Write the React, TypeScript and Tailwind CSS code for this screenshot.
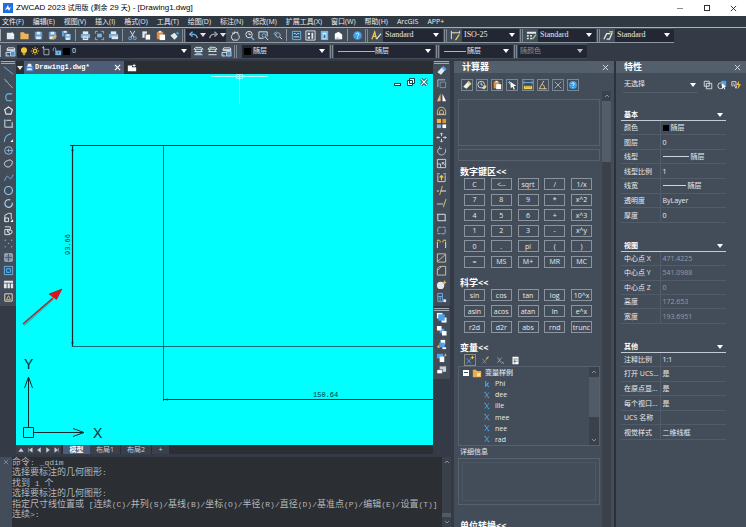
import { useState } from 'react';
import type { ReactNode } from 'react';
import clsx from 'clsx';

const W = '#e4e9ef';
const B = '#6db7ea';
const O = '#f0b050';

/* 12x12 toolbar glyphs */
const icons: Record<string, ReactNode> = {
  newFile: <><path d="M2 3h6l2 2v5H2z" fill={W} /><path d="M8 2.500v4M6 4.500h4" stroke="#fff" /></>,
  open: <path d="M1.500 2.500h4l1 1.500h4v6h-9z" fill="#eeb25d" />,
  save: <><path d="M2 2h8v8H2z" fill="#5f9fd8" /><path d="M4 2h4v3H4zM3.500 7h5v3h-5z" fill={W} /></>,
  saveAs: <><path d="M2 2h8v8H2z" fill="#5f9fd8" /><path d="M4 2h4v3H4zM3 7h4v3H3z" fill={W} /><path d="M6 10l4-4" stroke={O} strokeWidth="2" /></>,
  saveAll: <><path d="M1 1h6v6H1z" fill="#5f9fd8" /><path d="M3 1h3v2H3z" fill={W} /><path d="M4 4h7v7H4z" fill="#7db8e8" stroke="#2f3a48" strokeWidth=".6" /><path d="M6 4.500h3v2H6zM5.500 8.500h4V11h-4z" fill={W} /></>,
  print: <><path d="M3 1.500h6v3H3z" fill={W} /><path d="M1 4.500h10v4H1z" fill="#7ab6e6" /><path d="M3 7h6v4H3z" fill={W} /><path d="M4 9h4" stroke="#5b7d9b" /></>,
  preview: <><path d="M1.500 4V1.500H4M8 1.500h2.500V4M10.500 8v2.500H8M4 10.500H1.500V8" fill="none" stroke="#a6b3c2" /><path d="M3.500 4h5v4h-5z" fill="#7ab6e6" /></>,
  publish: <><path d="M3 1.500h6v3H3z" fill={W} /><path d="M1 4.500h10v4H1z" fill="#7ab6e6" /><path d="M4 7h7v3H4z" fill={W} /></>,
  cut: <><path d="M3.500 1l4 7M8.500 1l-4 7" stroke={W} fill="none" /><circle cx="3.500" cy="9" r="1.600" fill="none" stroke={B} /><circle cx="8.500" cy="9" r="1.600" fill="none" stroke={B} /></>,
  copy: <><path d="M1.500 1.500h5v7h-5z" fill={W} /><path d="M4.500 4.500h6v6.500h-6z" fill="#fff" stroke="#3e4855" /></>,
  paste: <><path d="M2 2h7v8H2z" fill="#d98d3f" /><path d="M4 1h3v2H4z" fill={W} /><path d="M5 5h6v6H5z" fill="#fff" /></>,
  match: <><path d="M1.500 6L6 3l3.500 4L6 10.500z" fill={W} /><path d="M7 3.500L10 1.500l1 4z" fill="#4f9fe0" /></>,
  undo: <path d="M10 9C10 5 7 4.500 4 4.500M5 2L2 4.500 5 7" fill="none" stroke={B} strokeWidth="1.500" />,
  redo: <path d="M2 9c0-4 3-4.500 6-4.500M7 2l3 2.500L7 7" fill="none" stroke="#9aa4b0" strokeWidth="1.500" />,
  pan: <path d="M3 11C1 8 1 6 3 5V3l2 1V2l2 1 1-1 1 3c2 2 1 5-1 6z" fill="none" stroke={W} />,
  zoomRt: <><circle cx="5.500" cy="5" r="3.500" fill="none" stroke={W} /><path d="M5.500 3v2h2" stroke={W} fill="none" /><path d="M8 8l3 3" stroke={B} strokeWidth="1.500" /></>,
  zoomWin: <><path d="M1 2h9v5M1 2v7h5" stroke={W} fill="none" /><circle cx="6.500" cy="6" r="2" fill="none" stroke={B} /><path d="M8 7.500l3 3.500" stroke={W} /></>,
  zoomPrev: <><path d="M5 2L2 4l3 2" stroke={B} fill="none" /><circle cx="6.500" cy="5.500" r="2.500" fill="none" stroke="#aab4c0" /><path d="M8.500 7.500L11 10" stroke={W} /></>,
  props: <><path d="M1.500 1.500h9v9h-9z" fill="#28506f" stroke={B} /><path d="M3 4h2l1 1 1-1h2M3 7.500h6" stroke={W} fill="none" /></>,
  design: <><path d="M1 1h10v10H1z" fill="none" stroke={W} /><path d="M3 3h2.500v2.500H3zM3 7h2.500v2.500H3zM7 3h2v6.500H7z" fill={W} /></>,
  palette: <><path d="M2 1h8v10H2z" fill={B} /><path d="M4 3h4v7H4z" fill={W} /><path d="M5 5h2v4H5z" fill="#386a94" /></>,
  markup: <><path d="M2 4l4-2 4 3v5H2z" fill="#fff" /><path d="M2 10l3-3 3 3z" fill="#cbd3dc" /></>,
  help: <><circle cx="6" cy="6" r="4.700" fill="#3fa0e8" /><path d="M4.500 4.700c0-2 3.200-1.800 3 0C7.500 6 6 6 6 7.200" fill="none" stroke="#fff" /><path d="M5.500 8.300h1v1h-1z" fill="#fff" /></>,
  textStyle: <><path d="M1 10L4 2l2 8M2 7h4" stroke="#f3cf4f" fill="none" strokeWidth="1.300" /><path d="M6 10l5-6" stroke={W} strokeWidth="1.300" /></>,
  dimStyle: <><path d="M1.500 1v9M1.500 3h9M10.500 1v3" stroke={W} fill="none" /><path d="M3 3l2-1v2z" fill={O} /><path d="M6 11l4-6" stroke="#f3cf4f" strokeWidth="1.300" /></>,
  tableStyle: <><path d="M1 2h10v2H1zM1 5.500h2v1.500H1zM4.500 5.500h2v1.500h-2zM1 8.500h2V10H1zM4.500 8.500h2V10h-2z" fill={W} /><path d="M7 10l4-5" stroke="#8ed68a" strokeWidth="1.500" /></>,
  leader: <><path d="M1 10l3-6h4M4 10h3l3-7" stroke={W} fill="none" strokeWidth="1.400" /><path d="M7 2h4" stroke="#c7dc63" strokeWidth="1.500" /></>,
  layers: <><path d="M3 2h7l1 2H2zM2 5h9M1 7h9" stroke={W} fill="none" /><path d="M1 7v4h4M6 6h5v5H6z" stroke={W} fill="#4e93cd" strokeWidth=".7" /></>,
  layerState: <><path d="M3 1.500h6l2 2H1zM1.500 6h9M1.500 9.500h9M3 6V3.500M9 6V3.500" stroke={W} fill="none" /><path d="M3 7h6v2H3z" fill={B} /></>,
  layerPrev: <><path d="M3 1.500h6l2 2H1zM1.500 6h9M1.500 9.500h9M3 6V3.500M9 6V3.500" stroke={W} fill="none" /><path d="M5 0L2 2l3 2" fill="#74cf74" /></>,
  bulb: <><circle cx="6" cy="5" r="3.600" fill="#f7c52f" /><path d="M4.500 8h3v3h-3z" fill="#c9a140" /></>,
  sun: <><circle cx="6" cy="6" r="2" fill="none" stroke="#f7c52f" strokeWidth="1.300" /><path d="M6 1v2M6 9v2M1 6h2M9 6h2M2.500 2.500l1.400 1.400M8.100 8.100l1.400 1.400M9.500 2.500L8.100 3.900M3.900 8.100L2.500 9.500" stroke="#f7c52f" /></>,
  viewport: <path d="M3.500 4h6v6.500h-6zM1 2h3M3 0v4" fill="none" stroke="#b4bcc6" />,
  unlock: <><path d="M1.500 6V3.500c0-2 3-2 3 0V6" fill="none" stroke={B} /><path d="M4 5.500h7v5.500H4z" fill={B} /><path d="M7 7h1v2H7z" fill="#214766" /></>,
  dwg: <><path d="M1 6l3-4h5l2 4v5H1z" fill="#3f8ede" /><path d="M4 1h4l1 4H3zM3 7h6v2.500H3z" fill="#e7f2ff" /></>,
  newTab: <><path d="M1 3h5v2h5v5H1z" fill="#fff" /><path d="M8.500 1v4M6.500 3h4" stroke="#fff" /></>,

  line: <path d="M1 2l10 8" stroke={B} />,
  xline: <path d="M1.500 1l9 10M4 3l-1 1" stroke="#7fc4ee" />,
  pline: <path d="M10 2H6C2 2 2 9.500 6 9.500h4" fill="none" stroke={B} strokeWidth="1.200" />,
  polygon: <path d="M6 2l4.200 3.200L8.700 10H3.300L1.800 5.200z" fill="none" stroke={W} strokeWidth="1.200" />,
  rect: <><path d="M2 3v7h8V4.500M3.500 2.500H9" fill="none" stroke={W} /><path d="M1 1.500h2v2H1zM9 9h2v2H9z" fill={B} /></>,
  arc: <><path d="M1.500 11C1.500 6 4 3 9 2" fill="none" stroke={B} strokeWidth="1.200" /><path d="M11 8v3H8z" fill="#fff" /></>,
  circle: <><circle cx="6" cy="6" r="4.200" fill="none" stroke="#a8bccb" /><path d="M6 4v4M4 6h7" stroke={B} /></>,
  revcloud: <path d="M3 9C0 7 2 3 5 3c3-2 6 0 5 3-1 3-4 5-7 3z" fill="none" stroke={W} />,
  spline: <path d="M1 9c2 1 2-6 4.500-4S8 10 11 3" fill="none" stroke={B} />,
  ellipse: <circle cx="6" cy="6" r="4.300" fill="none" stroke="#8fd0f4" strokeWidth="1.200" />,
  earc: <path d="M8 2C2 0 0 8 5 10c3 1 6-2 5-5" fill="none" stroke="#a9cfe6" strokeWidth="1.300" />,
  insert: <><path d="M2 10.500V3.500L6 1.500h3v6.500M2 6.500h4v4H2z" fill="none" stroke={W} /><path d="M11 8v3H8z" fill="#fff" /></>,
  block: <><path d="M2 2h6v3H2v5.500h6M5 5v3" fill="none" stroke={W} /><circle cx="8" cy="7.500" r="2" fill="none" stroke={W} /></>,
  point: <path d="M2 2h1v1H2zM9 2h1v1H9zM5.500 5.500h1v1h-1zM2 9h1v1H2zM9 9h1v1H9z" fill={B} stroke={B} strokeWidth=".3" />,
  hatch: <><path d="M2 2h8v8H2z" fill="#7790a5" stroke="#b8c5d1" /><path d="M2 6h8M6 2v8" stroke="#4b5b6b" /></>,
  region: <><path d="M1.500 1.500h9v9h-9z" fill="#25567c" stroke={B} /><path d="M4 4h4v4H4z" fill="none" stroke={B} /></>,
  table: <path d="M1 2h10v2H1zM1 5h3v5H1zM5 5h2.500v5H5zM8.500 5H11v5H8.500z" fill={W} />,
  mtext: <><path d="M2 2h8v8H2z" fill="#3a434e" stroke={W} /><path d="M4 8l2-4 2 4M3.500 8.500h5" stroke="#f0c85a" fill="none" /></>,

  erase: <><path d="M1.500 8L7 2l3.500 3L5.500 10.500z" fill={W} /><path d="M6 3l2-2 3.500 3.500L9.500 6.500z" fill="#5ea9e6" /></>,
  copyObj: <><path d="M2 10V2h8" fill="none" stroke="#b8c2cd" /><path d="M4.500 4.500h6v6h-6z" fill="none" stroke="#7d97ad" /></>,
  mirror: <><path d="M5 1.500V10H1z" fill="#e7bd82" /><path d="M7 1.500V10h4z" fill="#fff" /></>,
  offset: <path d="M1.500 10.500V7C2 1 10 1 10.500 7v3.500zM4 10V7c0-2 4-2 4 0v3z" fill="none" stroke="#e5c58c" />,
  array: <><path d="M1 1h4.500v4.500H1z" fill={O} /><path d="M7 1h4v4.500H7z" fill="#e39532" /><path d="M1 7h4.500v4H1z" fill="#7db8e8" /><path d="M7 7h4v4H7z" fill="#fff" /></>,
  move: <path d="M6 1v3.500M6 7.500V11M1 6h3.500M7.500 6H11M4.500 2.500L6 1l1.500 1.500M4.500 9.500L6 11l1.500-1.500M2.500 4.500L1 6l1.500 1.500M9.500 4.500L11 6 9.500 7.500" fill="none" stroke={W} strokeWidth=".9" />,
  rotate: <path d="M4 1.500v2.500h2.500M4 3C0 6 2 11 6 10.800c3.500 0 5.500-3.800 4-6.800" fill="none" stroke="#c5ccd5" />,
  scale: <path d="M1.500 1.500h9v9h-9zM1.500 6.500H5v4M7 5l3 3M7 5h2M7 5v2" fill="none" stroke="#d2d8df" />,
  stretch: <><path d="M2 3.500v7h8v-7M1 2h3M8 2h3" fill="none" stroke="#dfd7c2" /><path d="M6 9V4M4 6l2-2 2 2" stroke="#f3c64c" fill="none" strokeWidth="1.300" /></>,
  trim: <><path d="M7 1L4 11" stroke="#e6bf60" /><path d="M5 6.500h6M1 6.500h2" stroke={W} strokeWidth="1.200" /></>,
  extend: <><path d="M1 6.500h7" stroke="#cfd5dc" /><path d="M11 1L8 10" stroke="#e0c781" /></>,
  breakAt: <path d="M2 2.500h8v7H2zM1 2.500h1M10 9.500h1" fill="none" stroke={W} />,
  breakObj: <path d="M2 2.500h8v7H2z" fill="none" stroke="#9eb6c8" strokeDasharray="4 1" />,
  join: <><path d="M1.500 4v7M10.500 4v7" stroke={W} /><path d="M1 2h3v1H1zM8 2h3v1H8zM4 3h1v2H4zM7 3h1v2H7z" fill="#f1ce55" /></>,
  chamfer: <path d="M1.500 2v9h9V2zM2 10l8-7" fill="none" stroke="#cfc4aa" />,
  fillet: <path d="M1.500 11V6c0-3 1-4.500 4-4.500h5V11zM1.500 6L6 1.500" fill="none" stroke="#cfc4aa" />,
  explode: <><circle cx="5" cy="7" r="4" fill={W} /><path d="M7 4l3-3v2l1.500.5L9 6z" fill="#e7b24d" /></>,
  editBlock: <><path d="M2 1.500h5v9H2zM2 5h5M4.500 5v5" fill="none" stroke={B} /><path d="M8 8h3v3H8z" fill={W} /></>,
  front: <><path d="M1 1h6v6H1z" fill="#fff" /><path d="M6 6h5.500v5.500H6z" fill="#fff" /><path d="M2.500 2.500h7v7h-7z" fill="#4aa2ec" /></>,
  back: <><path d="M4 4h5v5H4z" fill="#4aa2ec" /><path d="M1 1h5v5H1zM6.500 6.500h5v5h-5z" fill="#fff" /></>,
  above: <><path d="M5 1h5v5H5z" fill="#fff" /><path d="M3.500 4h6v5h-6z" fill="#4aa2ec" /><path d="M7 9h4v2H7z" fill="#fff" /><path d="M1 9l2-3 1 4z" fill={O} /></>,
  under: <><path d="M1 2h7v5H1z" fill="#4aa2ec" /><path d="M4 5h5v6H4z" fill="#fff" /><path d="M9 5l1-4 1.500 3z" fill={O} /></>,
  orderText: <><path d="M4 1.500h7v6H4z" fill="#c7cfd8" /><path d="M1 5h6v4.500H1z" fill="#fff" stroke="#3a434e" strokeWidth=".7" /></>,

  clear: <><path d="M1.500 8L7 2l3.500 3L5.500 10.500z" fill="#f4f1e6" /><path d="M6 3l2-2 3.500 3.500L9.500 6.500z" fill="#e8c98f" /></>,
  history: <><circle cx="5" cy="5.500" r="4" fill="none" stroke={W} /><path d="M5 3v3h2" stroke={W} fill="none" /><path d="M6 10l4-4 1.500 2-3 3.500z" fill="#e7d5b0" /></>,
  getPoint: <><path d="M3 1v4M1 3h4" stroke={B} /><path d="M4 2l7 5-3 .5L9.500 11 8 11.500 6.500 8 4.500 10z" fill="#fff" /></>,
  distance: <><path d="M1 3h10M1 1v4M11 1v4" stroke={B} /><path d="M1 7h10v4H1z" fill="#f0d14f" /><path d="M3 7v2M5 7v2M7 7v2M9 7v2" stroke="#5c5640" strokeWidth=".6" /></>,
  angle: <path d="M7 1L1.500 10.500h9M5 5c2 1 3 3 3 5.500" fill="none" stroke="#f0dca2" />,
  cross: <path d="M2 2l8 8M10 2l-8 8" stroke="#c3cbd4" strokeWidth=".9" />,
  varNew: <><path d="M2 4l5 6M7.500 4L2 10" stroke="#5ea4d8" /><path d="M9 1v4M7 3h4" stroke="#f0d14f" /></>,
  varEdit: <><path d="M2 4l5 6M7.500 4L2 10" stroke="#5ea4d8" /><path d="M7 4l3-3" stroke="#f0b050" strokeWidth="1.500" /></>,
  varDel: <><path d="M2 2l5 7M7.500 2L2 9" stroke="#a8b1bb" /><path d="M7.500 7.500l3 3M10.500 7.500l-3 3" stroke="#a8b1bb" strokeWidth=".8" /></>,
  calc: <><path d="M2 1h8v10H2z" fill="#fff" /><path d="M3 4h6M3 7h6M5 5v5" stroke="#454f5b" strokeWidth=".9" /></>,
  folder: <><path d="M1 2h4l1 1.500h5V11H1z" fill="#edaa4f" /><path d="M6 6h4v4H6z" fill="#f8dfb5" /></>,
  xVar: <path d="M3 2l5.500 8M9 2L2.500 10M2 2h2.500M7 10h2.500" fill="none" stroke="#4aa3e4" strokeWidth="1.300" />,
  kVar: <path d="M4 1.500v9M8.500 4L4.500 7.500M5.500 6.500l3.500 4" fill="none" stroke="#4aa3e4" strokeWidth="1.600" />,
  pickAdd: <path d="M1.500 1.500h6v6h-6zM4 4h6.500v6.500H4z" fill="none" stroke={W} />,
  select: <><circle cx="4.500" cy="7" r="3.500" fill="none" stroke={W} /><path d="M5 1h6v6H5z" fill="#4aa2ec" /><path d="M6 4l5 4-2 .4L10 11l-1 .5-1-2.500-2 1.500z" fill="#fff" /></>,
  quick: <><path d="M1 2h5v5M1 2v5h2M3 4l3 6 1-3" fill="none" stroke={W} /><path d="M9.500 1L6.500 6h2.500L8 11l4-6H9.500z" fill="#f7c52f" /></>,
};

function Icon({ name, className = 'size-3' }: { name: string; className?: string }) {
  return (
    <svg viewBox="0 0 12 12" className={clsx('shrink-0', className)} aria-hidden="true">
      {icons[name]}
    </svg>
  );
}

function Tool({ name }: { name: string }) {
  return (
    <button aria-label={name} className="flex h-[13px] w-[14px] shrink-0 items-center justify-center hover:bg-[#5b6878]">
      <Icon name={name} className="size-[11px]" />
    </button>
  );
}

function Caret({ className = 'text-white' }: { className?: string }) {
  return (
    <svg viewBox="0 0 6 4" className={clsx('h-1 w-[6px] shrink-0', className)} aria-hidden="true">
      <path d="M0 0h6L3 4z" fill="currentColor" />
    </svg>
  );
}

function Sep() {
  return <span className="mx-0.5 h-3 w-px shrink-0 bg-[#8b95a2]" />;
}

function Grip() {
  return <span className="mx-px h-[13px] w-[3px] shrink-0 border-x border-[#7f8995]" />;
}

type ComboProps = {
  label: string;
  value: string;
  width: string;
  pad?: string;
  serif?: boolean;
  muted?: boolean;
  children?: ReactNode;
};

function Combo({ label, value, width, pad = 'pl-0.5', serif, muted, children }: ComboProps) {
  return (
    <div className={clsx('relative flex h-[13px] shrink-0 items-center bg-[#222733]', width)}>
      <div className="pointer-events-none absolute inset-y-0 left-0.5 flex items-center">{children}</div>
      <select
        aria-label={label}
        disabled={muted}
        className={clsx(
          'h-full w-full appearance-none bg-transparent outline-none disabled:opacity-100',
          pad,
          serif ? 'font-["Liberation_Serif",serif] text-[8px]' : 'text-[7px]',
          muted ? 'text-[#8b929c]' : 'text-[#e6eaef]'
        )}
      >
        <option>{value}</option>
      </select>
      <span className="pointer-events-none absolute inset-y-0 right-1 flex items-center">
        <Caret className={muted ? 'text-[#b9bec6]' : 'text-white'} />
      </span>
    </div>
  );
}

const menus = ['文件(F)', '编辑(E)', '视图(V)', '插入(I)', '格式(O)', '工具(T)', '绘图(D)', '标注(N)', '修改(M)', '扩展工具(X)', '窗口(W)', '帮助(H)', 'ArcGIS', 'APP+'];

const drawTools = ['line', 'xline', 'pline', 'polygon', 'rect', 'arc', 'circle', 'revcloud', 'spline', 'ellipse', 'earc', 'insert', 'block', 'point', 'hatch', 'region', 'table', 'mtext'];
const modifyTools = ['erase', 'copyObj', 'mirror', 'offset', 'array', 'move', 'rotate', 'scale', 'stretch', 'trim', 'extend', 'breakAt', 'breakObj', 'join', 'chamfer', 'fillet', 'explode', 'editBlock'];
const orderTools = ['front', 'back', 'above', 'under', 'orderText'];

const calcTools = ['clear', 'history', 'paste', 'getPoint', 'distance', 'angle', 'cross', 'help'];
const numberKeys = ['C', '<--', 'sqrt', '/', '1/x', '7', '8', '9', '*', 'x^2', '4', '5', '6', '+', 'x^3', '1', '2', '3', '-', 'x^y', '0', '.', 'pi', '(', ')', '=', 'MS', 'M+', 'MR', 'MC'];
const scienceKeys = ['sin', 'cos', 'tan', 'log', '10^x', 'asin', 'acos', 'atan', 'ln', 'e^x', 'r2d', 'd2r', 'abs', 'rnd', 'trunc'];
const variables = ['Phi', 'dee', 'ille', 'mee', 'nee', 'rad'];

const commandLog = ['命令: _qdim', '选择要标注的几何图形:', '找到 1 个', '选择要标注的几何图形:', '指定尺寸线位置或 [连续(C)/并列(S)/基线(B)/坐标(O)/半径(R)/直径(D)/基准点(P)/编辑(E)/设置(T)]', '连续>:'];

const propGroups = [
  {
    title: '基本',
    height: 'h-[102px]',
    muted: false,
    rows: [
      ['颜色', <span className="flex items-center gap-0.5"><span className="size-[6px] bg-black" />随层</span>],
      ['图层', '0'],
      ['线型', <span className="flex items-center gap-0.5"><span className="h-px w-[26px] bg-[#cfd5dc]" />随层</span>],
      ['线型比例', '1'],
      ['线宽', <span className="flex items-center gap-0.5"><span className="h-px w-[23px] bg-[#cfd5dc]" />随层</span>],
      ['透明度', 'ByLayer'],
      ['厚度', '0'],
    ],
  },
  {
    title: '视图',
    height: 'h-[72px]',
    muted: true,
    rows: [['中心点 X', '471.4225'], ['中心点 Y', '541.0988'], ['中心点 Z', '0'], ['高度', '172.653'], ['宽度', '193.6951']],
  },
  {
    title: '其他',
    height: 'h-[87px]',
    muted: false,
    rows: [['注释比例', '1:1'], ['打开 UCS...', '是'], ['在原点显...', '是'], ['每个视口...', '是'], ['UCS 名称', ''], ['视觉样式', '二维线框']],
  },
];

function TitleBar() {
  return (
    <header className="flex h-4 shrink-0 items-center bg-white pl-[3px] text-black">
      <svg viewBox="0 0 10 10" className="size-[10px]" aria-hidden="true">
        <path d="M0 0h10v10H0z" fill="#1d6fe8" />
        <path d="M2 7l3-5 1 3 2-1-2 4-1-2z" fill="#fff" />
      </svg>
      <h1 className='ml-[3px] flex-1 font-["Liberation_Sans","Noto_Sans_CJK_SC",sans-serif] text-[8px] leading-none'>
        ZWCAD 2023 <span className="text-[7px]">试用版</span> (<span className="text-[7px]">剩余</span> 29 <span className="text-[7px]">天</span>) - [Drawing1.dwg]
      </h1>
      <button aria-label="最小化" className="flex h-4 w-[27px] items-center justify-center"><span className="h-px w-[6px] bg-[#8a8a8a]" /></button>
      <button aria-label="最大化" className="flex h-4 w-[27px] items-center justify-center"><span className="size-[6px] border border-[#333]" /></button>
      <button aria-label="关闭" className="flex h-4 w-[26px] items-center justify-center">
        <svg viewBox="0 0 8 8" className="size-[7px]"><path d="M1 1l6 6M7 1L1 7" stroke="#222" /></svg>
      </button>
    </header>
  );
}

function Toolbars() {
  return (
    <div className="shrink-0 pb-0.5">
      <div className="flex h-4 items-center border-t border-[#a9b1bb]">
        <div className="flex h-[15px] items-center border-b border-[#8f98a3] bg-[#434d5a]">
          <span className="mr-0.5 h-3 w-px bg-[#a0a9b4]" />
          {['newFile', 'open', 'save', 'saveAs', 'saveAll'].map((n) => <Tool key={n} name={n} />)}
          <Sep />
          {['print', 'preview', 'publish'].map((n) => <Tool key={n} name={n} />)}
          <Sep />
          {['cut', 'copy', 'paste', 'match'].map((n) => <Tool key={n} name={n} />)}
          <Grip />
          <div className="mr-0.5 flex h-[13px] items-center bg-[#222733]">
            <Tool name="undo" />
            <Caret className="text-[#dfe3e8]" />
            <Tool name="redo" />
            <Caret className="text-[#dfe3e8]" />
          </div>
          {['pan', 'zoomRt', 'zoomWin', 'zoomPrev'].map((n) => <Tool key={n} name={n} />)}
          <Sep />
          {['props', 'design', 'palette', 'markup'].map((n) => <Tool key={n} name={n} />)}
          <Sep />
          <Tool name="help" />
          <Grip />
          <Tool name="textStyle" />
          <Combo label="文字样式" value="Standard" width="w-[60px]" serif />
          <Grip />
          <Tool name="dimStyle" />
          <Combo label="标注样式" value="ISO-25" width="w-[57px]" serif />
          <Grip />
          <Tool name="tableStyle" />
          <Combo label="表格样式" value="Standard" width="w-[58px]" serif />
          <Grip />
          <Tool name="leader" />
          <Combo label="引线样式" value="Standard" width="w-[59px]" serif />
        </div>
      </div>
      <div className="flex h-4 items-center">
        <div className="flex h-4 items-center bg-[#434d5a]">
          <span className="mr-0.5 h-3 w-px bg-[#a0a9b4]" />
          <Tool name="layers" />
          <Combo label="图层" value="0" width="w-[174px]" pad="pl-[55px]">
            <div className="flex items-center">
              {['bulb', 'sun', 'viewport', 'unlock'].map((n) => <Icon key={n} name={n} className="mr-px size-[10px]" />)}
              <span className="size-[7px] bg-black" />
            </div>
          </Combo>
          {['layerState', 'layerPrev', 'layers'].map((n) => <Tool key={n} name={n} />)}
          <Grip />
          <span className="w-1" />
          <Combo label="颜色" value="随层" width="w-[87px]" pad="pl-[11px]">
            <span className="size-[7px] bg-black" />
          </Combo>
          <Grip />
          <Combo label="线型" value="随层" width="w-[101px]" pad="pl-[41px]">
            <span className="ml-0.5 h-px w-[37px] bg-[#aeb5be]" />
          </Combo>
          <Grip />
          <Combo label="线宽" value="随层" width="w-[73px]" pad="pl-[27px]">
            <span className="ml-0.5 h-px w-[22px] bg-[#aeb5be]" />
          </Combo>
          <Grip />
          <Combo label="打印样式" value="随颜色" width="w-[69px]" muted />
        </div>
      </div>
    </div>
  );
}

function Drawing() {
  return (
    <div className="relative min-h-0 flex-1 overflow-hidden bg-[#00ffff]">
      <svg className="block h-full w-full" role="img" aria-label="Drawing1">
        <path d="M195 2.500h57" stroke="#b9ffff" />
        <path d="M223.500 0v30" stroke="#8fffff" />
        <path d="M220.500.5h6v4h-6z" fill="none" stroke="#8fffff" />
        <g stroke="#0b2a2e">
          <path d="M56.500 72v201" strokeWidth="1.200" />
          <line x1="54" y1="71.500" x2="100%" y2="71.500" />
          <line x1="56" y1="272.500" x2="100%" y2="272.500" stroke="#0a7076" />
          <path d="M147.500 72v255" stroke="#0a7076" />
          <line x1="147" y1="325.500" x2="100%" y2="325.500" />
        </g>
        <path d="M56.500 72l-1 5h2zM56.500 273l-1-5h2zM147 325.500l5-1v2z" fill="#0b2a2e" />
        <g className='font-["Liberation_Mono",monospace] text-[7px]' fill="#063338">
          <text x="297" y="323">150.64</text>
          <text transform="translate(54 181) rotate(-90)">93.66</text>
        </g>
        <g stroke="#0b2a2e" fill="none">
          <path d="M7.500 353.500h10v10h-10zM12.500 353v-50M8.500 314l4-11 4 11M18 358.500h50M57 354.500l11 4-11 4" />
        </g>
        <g className='font-["Liberation_Sans",sans-serif] text-[14px]' fill="#0b2a2e">
          <text x="8" y="295">Y</text>
          <text x="77" y="364">X</text>
        </g>
        <path d="M8 251.500l29-26" stroke="#3b6f75" strokeWidth="1.500" opacity=".45" />
        <path d="M7 250l30-26" stroke="#b3202a" strokeWidth="1.500" />
        <path d="M46 215l-5.500 10.500L33 220z" fill="#e3121a" stroke="#8d1a20" strokeWidth=".6" />
      </svg>
      <div className="absolute right-[5px] top-1 flex gap-[5px]">
        <button aria-label="最小化图形" className="flex size-2 items-end">
          <span className="h-[3px] w-[7px] border border-[#114348] bg-white" />
        </button>
        <button aria-label="还原图形">
          <svg viewBox="0 0 8 8" className="size-2"><path d="M2.500.5h5v5h-5zM.5 2.500h5v5h-5z" fill="#e8ffff" stroke="#114348" /></svg>
        </button>
        <button aria-label="关闭图形">
          <svg viewBox="0 0 8 8" className="size-2"><path d="M1 1l6 6M7 1L1 7" stroke="#114348" strokeWidth="3" /><path d="M1 1l6 6M7 1L1 7" stroke="#e8ffff" strokeWidth="1.200" /></svg>
        </button>
      </div>
    </div>
  );
}

function Documents() {
  return (
    <section className="flex min-w-0 flex-1 flex-col bg-[#2b2e32]">
      <div className="flex h-[13px] shrink-0 items-center">
        <span className="flex w-2 justify-center"><Caret className="text-[#dfe3e8]" /></span>
        <div className="flex h-full w-[100px] items-center bg-[#4d5c77] pl-px pr-[3px]">
          <Icon name="dwg" className="size-[9px]" />
          <span className='ml-px flex-1 font-["Liberation_Mono",monospace] text-[7px] font-bold text-white'>Drawing1.dwg*</span>
          <button aria-label="关闭" className="flex items-center">
            <svg viewBox="0 0 8 8" className="size-[7px]"><path d="M1 1l6 6M7 1L1 7" stroke="#fff" strokeWidth="1.300" /></svg>
          </button>
        </div>
        <button aria-label="新建" className="ml-[3px]"><Icon name="newTab" className="size-[10px]" /></button>
      </div>
      <Drawing />
      <div className="flex h-[9px] shrink-0 items-center text-[7px] leading-none text-[#cdd3da]">
        {['M1 6h6L4 2z', 'M2 1v6M7 1L3 4l4 3z', 'M6 1L2 4l4 3z', 'M2 1l4 3-4 3z', 'M6 1v6M1 1l4 3-4 3z'].map((d) => (
          <button key={d} aria-label="布局导航" className="flex h-full w-[9px] items-center justify-center bg-[#3a414c]">
            <svg viewBox="0 0 8 8" className="size-[6px]"><path d={d} fill="#cdd3da" stroke="#cdd3da" strokeWidth=".6" /></svg>
          </button>
        ))}
        <button className="ml-0.5 h-full w-[27px] bg-[#4d5c77] font-bold text-white">模型</button>
        <button className="h-full w-[31px] border-r border-[#2b2e32] bg-[#3a414c]">布局1</button>
        <button className="h-full w-[31px] border-r border-[#2b2e32] bg-[#3a414c]">布局2</button>
        <button className="h-full w-[17px] bg-[#3a414c]">+</button>
      </div>
    </section>
  );
}

function ToolColumn({ tools, height }: { tools: string[]; height: string }) {
  return (
    <div className="bg-[#434d5a] px-px pb-0.5">
      <div className="h-[3px] border-y border-[#a0a9b4]" />
      <div className={clsx('flex flex-col items-center justify-between', height)}>
        {tools.map((n) => <Tool key={n} name={n} />)}
      </div>
    </div>
  );
}

// latin runs are set a step smaller than the hanzi
function LogLine({ text }: { text: string }) {
  return (
    <p className="h-[10px] whitespace-nowrap">
      {text.split(/([ -~]+)/).map((part, i) =>
        i % 2 ? <span key={i} className="whitespace-pre text-[8px] leading-none">{part}</span> : part
      )}
    </p>
  );
}

function CommandPanel() {
  return (
    <section className="flex h-[70px] shrink-0 bg-[#2b2e32]">
      <div className="flex w-3 justify-center bg-[#434d5a] pt-0.5">
        <button aria-label="关闭命令行" className="flex size-[6px]">
          <svg viewBox="0 0 8 8" className="size-[6px]"><path d="M1 1l6 6M7 1L1 7" stroke="#8e97a3" /></svg>
        </button>
      </div>
      <div className='flex h-[63px] min-w-0 flex-1 flex-col justify-between pt-px font-["Liberation_Mono","Noto_Sans_CJK_SC",monospace] text-[9px] leading-[10px] text-[#b4b8bd]'>
        {commandLog.map((line, i) => <LogLine key={i} text={line} />)}
      </div>
      <Scrollbar width="w-[9px]" thumb="h-1 mt-auto" />
      <span className="w-[3px] bg-[#343b46]" />
    </section>
  );
}

function Scrollbar({ width, thumb }: { width: string; thumb: string }) {
  return (
    <div className={clsx('flex shrink-0 flex-col items-center bg-[#3a414a]', width)}>
      <svg viewBox="0 0 8 8" className="my-px size-2"><path d="M2 5l2-2 2 2" fill="none" stroke="#8791a0" /></svg>
      <span className={clsx('w-full bg-[#505b67]', thumb)} />
      <span className={clsx(!thumb.includes('mt-auto') && 'mt-auto')}>
        <svg viewBox="0 0 8 8" className="my-px size-2"><path d="M2 3l2 2 2-2" fill="none" stroke="#8791a0" /></svg>
      </span>
    </div>
  );
}

function PanelHeader({ title }: { title: string }) {
  return (
    <div className="flex h-3 shrink-0 items-center justify-between bg-[#535f6b] pl-2 pr-[5px]">
      <h2 className="text-[9px] font-bold leading-3 text-white">{title}</h2>
      <button aria-label="关闭" className="flex">
        <svg viewBox="0 0 8 8" className="size-[7px]"><path d="M1 1l6 6M7 1L1 7" stroke="#e4e9ef" /></svg>
      </button>
    </div>
  );
}

function Keys({ keys, height, onPress }: { keys: string[]; height: string; onPress: (k: string) => void }) {
  return (
    <div className={clsx('ml-[6px] mr-2 grid grid-cols-[repeat(5,21px)] content-between justify-between', height)}>
      {keys.map((k) => (
        <button key={k} onClick={() => onPress(k)} className="h-3 border border-[#8a939e] text-[7px] leading-none text-[#e6eaef] hover:bg-[#566271]">
          {k}
        </button>
      ))}
    </div>
  );
}

function Heading({ children, className }: { children: ReactNode; className?: string }) {
  return <h3 className={clsx('h-3 shrink-0 pl-0.5 text-[9px] font-bold leading-[11px] text-white', className)}>{children}</h3>;
}

function Calculator() {
  const [entry, setEntry] = useState('');

  return (
    <aside className="flex w-[160px] shrink-0 flex-col overflow-hidden bg-[#434d59]">
      <PanelHeader title="计算器" />
      <div className="flex h-[18px] shrink-0 items-end justify-between pl-[7px] pr-[35px]">
        {calcTools.map((n) => (
          <button key={n} aria-label={n} className="flex size-3 items-center justify-center border border-[#7b8693]">
            <Icon name={n} className="size-[10px]" />
          </button>
        ))}
      </div>
      <div className="flex min-h-0 flex-1 pr-[3px]">
        <div className="flex min-w-0 flex-1 flex-col overflow-hidden pl-1 pr-0.5 pt-2">
          <div className="h-[47px] shrink-0 border border-[#56616d]" />
          <input
            aria-label="表达式"
            value={entry}
            onChange={(e) => setEntry(e.target.value)}
            className="mt-[3px] h-3 w-full shrink-0 border border-[#56616d] px-1 text-[7px] text-white outline-none"
          />
          <Heading className="mt-[5px]">数字键区&lt;&lt;</Heading>
          <Keys keys={numberKeys} height="h-[90px] shrink-0" onPress={(k) => setEntry(entry + k)} />
          <Heading className="mt-[9px]">科学&lt;&lt;</Heading>
          <Keys keys={scienceKeys} height="h-[44px] shrink-0" onPress={(k) => setEntry(entry + k)} />
          <Heading className="mt-[9px]">变量&lt;&lt;</Heading>
          <div className="flex h-3 shrink-0 items-center gap-1 pl-[6px]">
            <button aria-label="新建变量" className="flex size-3 items-center justify-center border border-[#8b8d84]"><Icon name="varNew" className="size-[10px]" /></button>
            {['varEdit', 'varDel', 'calc'].map((n) => (
              <button key={n} aria-label={n} className="flex w-[11px] justify-center"><Icon name={n} className="size-[9px]" /></button>
            ))}
          </div>
          <div className="flex h-20 shrink-0 border border-[#56616d]">
            <ul className="grid flex-1 grid-rows-7 text-[7px] leading-none text-[#e6eaef]">
              <li className="flex items-center gap-[3px] pl-1">
                <span className="flex size-[6px] items-center justify-center bg-white"><span className="h-px w-[4px] bg-[#434d59]" /></span>
                <Icon name="folder" className="size-[10px]" />
                <span className="bg-[#525e6b]">变量样例</span>
              </li>
              {variables.map((v, i) => (
                <li key={v} className="flex items-center gap-1 pl-6">
                  <Icon name={i ? 'xVar' : 'kVar'} className="size-2" />
                  {v}
                </li>
              ))}
            </ul>
            <Scrollbar width="w-[10px]" thumb="h-[40px]" />
          </div>
          <p className="h-3 shrink-0 pl-0.5 text-[7px] leading-[11px] text-[#e6eaef]">详细信息</p>
          <div className="h-[47px] shrink-0 border border-[#56616d] p-[3px]">
            <div className="h-full border border-[#4c5763]" />
          </div>
          <Heading className="mt-[15px]">单位转换&lt;&lt;</Heading>
        </div>
        <div className="flex w-[9px] shrink-0 flex-col items-center bg-[#3a414a]">
          <svg viewBox="0 0 8 8" className="my-px size-2"><path d="M2 5l2-2 2 2" fill="none" stroke="#8791a0" /></svg>
          <span className="h-[61px] w-full bg-[#525d69]" />
        </div>
      </div>
    </aside>
  );
}

function Properties() {
  return (
    <aside className="flex w-[130px] shrink-0 flex-col overflow-hidden bg-[#434d59]">
      <PanelHeader title="特性" />
      <div className="flex h-[22px] shrink-0 items-center gap-0.5 pl-[7px] pr-1 pt-0.5">
        <div className="relative mr-0.5 flex flex-1 items-center border-b border-[#525d69]">
          <select aria-label="选择" className="h-[14px] w-full appearance-none bg-transparent pl-px text-[7px] text-[#e6eaef] outline-none">
            <option>无选择</option>
          </select>
          <span className="pointer-events-none absolute right-0.5"><Caret /></span>
        </div>
        {['pickAdd', 'select', 'quick'].map((n) => (
          <button key={n} aria-label={n} className="flex w-3 justify-center"><Icon name={n} className="size-[10px]" /></button>
        ))}
      </div>
      <div className="ml-[5px] mr-5">
        {propGroups.map((g, i) => (
          <section key={g.title} className={i ? 'pt-[17px]' : 'pt-[14px]'}>
            <div className="flex h-3 items-center justify-between border-b border-[#c3cad2] pl-[3px] pr-[3px]">
              <h3 className="text-[7px] font-bold leading-[11px] text-white">{g.title}</h3>
              <Caret />
            </div>
            <table className={clsx('w-full table-fixed border-collapse text-left text-[7px] leading-none', g.height)}>
              <tbody>
                {g.rows.map(([name, value], r) => (
                  <tr key={r} className="border-b border-[#515c68]">
                    <th className="w-[39px] whitespace-nowrap border-r border-[#515c68] pl-[3px] font-normal text-[#e6eaef]">{name}</th>
                    <td className={clsx('whitespace-nowrap pl-0.5', g.muted ? 'text-[#949ca6]' : 'text-[#e6eaef]')}>{value}</td>
                  </tr>
                ))}
              </tbody>
            </table>
          </section>
        ))}
      </div>
    </aside>
  );
}

export default function App() {
  return (
    <div lang="zh-CN" className='flex h-screen flex-col overflow-hidden bg-[#343b46] font-["Open_Sans","Noto_Sans_CJK_SC",sans-serif]'>
      <TitleBar />
      <nav className="flex h-[11px] shrink-0 items-center gap-[9px] bg-[#303842] pl-0.5 text-[7px] leading-none text-[#e9edf1]">
        {menus.map((m) => <button key={m} className="whitespace-nowrap">{m}</button>)}
      </nav>
      <Toolbars />
      <main className="flex min-h-0 flex-1">
        <div className="flex min-w-0 flex-1 flex-col">
          <div className="flex min-h-0 flex-1">
            <div className="w-4 shrink-0"><ToolColumn tools={drawTools} height="h-[240px]" /></div>
            <Documents />
            <div className="w-[17px] shrink-0">
              <ToolColumn tools={modifyTools} height="h-[240px]" />
              <div className="h-0.5" />
              <ToolColumn tools={orderTools} height="h-[66px]" />
            </div>
            <span className="w-1 shrink-0" />
          </div>
          <div className="h-[3px] shrink-0" />
          <CommandPanel />
        </div>
        <Calculator />
        <span className="w-0.5 shrink-0 bg-[#2c323b]" />
        <Properties />
      </main>
    </div>
  );
}
